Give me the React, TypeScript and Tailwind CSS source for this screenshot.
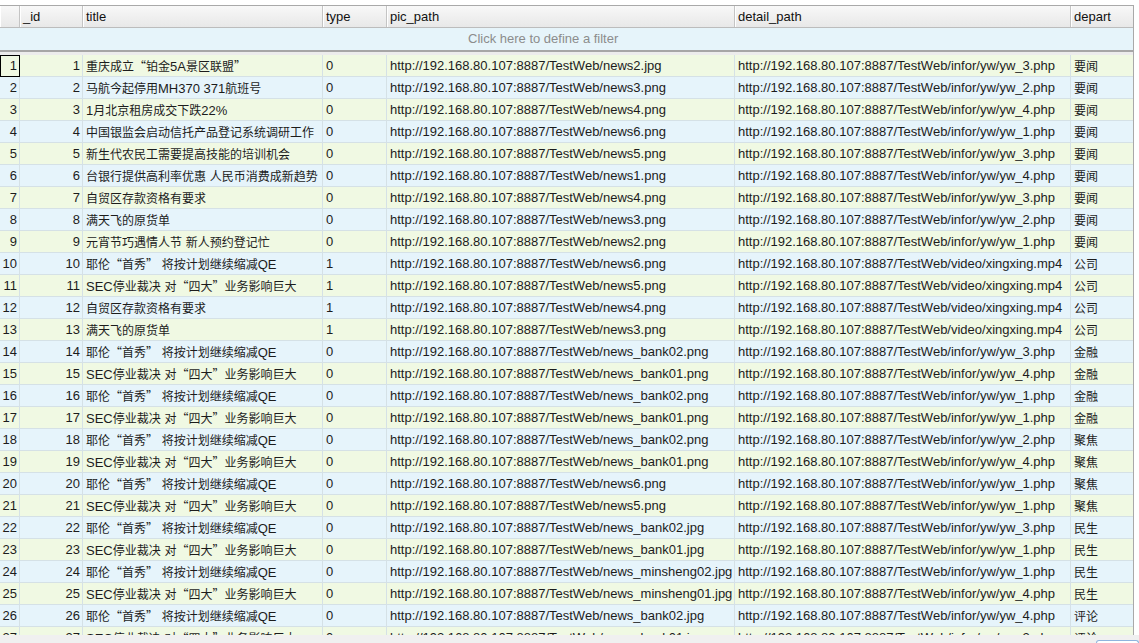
import type { ReactNode } from "react";

type NewsRow = {
  id: number;
  title: string;
  type: number;
  pic: string;
  detail: string;
  depart: string;
};

const HOST = "http://192.168.80.107:8887/TestWeb/";

const T_YELLEN = "耶伦“首秀” 将按计划继续缩减QE";
const T_SEC = "SEC停业裁决 对“四大”业务影响巨大";

const rows: NewsRow[] = [
  { id: 1, title: "重庆成立“铂金5A景区联盟”", type: 0, pic: "news2.jpg", detail: "infor/yw/yw_3.php", depart: "要闻" },
  { id: 2, title: "马航今起停用MH370 371航班号", type: 0, pic: "news3.png", detail: "infor/yw/yw_2.php", depart: "要闻" },
  { id: 3, title: "1月北京租房成交下跌22%", type: 0, pic: "news4.png", detail: "infor/yw/yw_4.php", depart: "要闻" },
  { id: 4, title: "中国银监会启动信托产品登记系统调研工作", type: 0, pic: "news6.png", detail: "infor/yw/yw_1.php", depart: "要闻" },
  { id: 5, title: "新生代农民工需要提高技能的培训机会", type: 0, pic: "news5.png", detail: "infor/yw/yw_3.php", depart: "要闻" },
  { id: 6, title: "台银行提供高利率优惠 人民币消费成新趋势", type: 0, pic: "news1.png", detail: "infor/yw/yw_4.php", depart: "要闻" },
  { id: 7, title: "自贸区存款资格有要求", type: 0, pic: "news4.png", detail: "infor/yw/yw_3.php", depart: "要闻" },
  { id: 8, title: "满天飞的原货单", type: 0, pic: "news3.png", detail: "infor/yw/yw_2.php", depart: "要闻" },
  { id: 9, title: "元宵节巧遇情人节 新人预约登记忙", type: 0, pic: "news2.png", detail: "infor/yw/yw_1.php", depart: "要闻" },
  { id: 10, title: T_YELLEN, type: 1, pic: "news6.png", detail: "video/xingxing.mp4", depart: "公司" },
  { id: 11, title: T_SEC, type: 1, pic: "news5.png", detail: "video/xingxing.mp4", depart: "公司" },
  { id: 12, title: "自贸区存款资格有要求", type: 1, pic: "news4.png", detail: "video/xingxing.mp4", depart: "公司" },
  { id: 13, title: "满天飞的原货单", type: 1, pic: "news3.png", detail: "video/xingxing.mp4", depart: "公司" },
  { id: 14, title: T_YELLEN, type: 0, pic: "news_bank02.png", detail: "infor/yw/yw_3.php", depart: "金融" },
  { id: 15, title: T_SEC, type: 0, pic: "news_bank01.png", detail: "infor/yw/yw_4.php", depart: "金融" },
  { id: 16, title: T_YELLEN, type: 0, pic: "news_bank02.png", detail: "infor/yw/yw_1.php", depart: "金融" },
  { id: 17, title: T_SEC, type: 0, pic: "news_bank01.png", detail: "infor/yw/yw_1.php", depart: "金融" },
  { id: 18, title: T_YELLEN, type: 0, pic: "news_bank02.png", detail: "infor/yw/yw_2.php", depart: "聚焦" },
  { id: 19, title: T_SEC, type: 0, pic: "news_bank01.png", detail: "infor/yw/yw_4.php", depart: "聚焦" },
  { id: 20, title: T_YELLEN, type: 0, pic: "news6.png", detail: "infor/yw/yw_1.php", depart: "聚焦" },
  { id: 21, title: T_SEC, type: 0, pic: "news5.png", detail: "infor/yw/yw_1.php", depart: "聚焦" },
  { id: 22, title: T_YELLEN, type: 0, pic: "news_bank02.jpg", detail: "infor/yw/yw_3.php", depart: "民生" },
  { id: 23, title: T_SEC, type: 0, pic: "news_bank01.jpg", detail: "infor/yw/yw_1.php", depart: "民生" },
  { id: 24, title: T_YELLEN, type: 0, pic: "news_minsheng02.jpg", detail: "infor/yw/yw_1.php", depart: "民生" },
  { id: 25, title: T_SEC, type: 0, pic: "news_minsheng01.jpg", detail: "infor/yw/yw_4.php", depart: "民生" },
  { id: 26, title: T_YELLEN, type: 0, pic: "news_bank02.jpg", detail: "infor/yw/yw_4.php", depart: "评论" },
  { id: 27, title: T_SEC, type: 0, pic: "news_bank01.jpg", detail: "infor/yw/yw_2.php", depart: "评论" },
];

const cols = "grid grid-cols-[20px_63px_240px_64px_348px_336px_63px]";

// CJK runs (incl. curly quotes) render in the Chinese font at 12px
function mixed(text: string): ReactNode[] {
  return text.split(/([\u3000-\u9fff\uff00-\uffef\u201c\u201d]+)/).map((part, i) =>
    /[\u3000-\u9fff\uff00-\uffef\u201c\u201d]/.test(part) ? (
      <span key={i} className="font-['Noto_Sans_CJK_SC',sans-serif] text-[12px]">
        {part}
      </span>
    ) : (
      <span key={i}>{part}</span>
    )
  );
}

function HeaderCell({ label }: { label: string }) {
  return (
    <div className="h-full overflow-hidden whitespace-nowrap border-r border-[#c4c4c4] pl-[3px] leading-[21px] shadow-[inset_1px_0_0_#ffffff]">
      {label}
    </div>
  );
}

function Cell({ children, right }: { children: ReactNode; right?: boolean }) {
  return (
    <div
      className={
        right
          ? "h-[22px] overflow-hidden whitespace-nowrap border-r border-b border-[#d5e1e6] pr-[2px] text-right leading-[21px]"
          : "h-[22px] overflow-hidden whitespace-nowrap border-r border-b border-[#d5e1e6] pl-[3px] leading-[21px]"
      }
    >
      {children}
    </div>
  );
}

export default function App() {
  return (
    <div className="flex h-[643px] w-[1139px] flex-col overflow-hidden bg-white font-['Liberation_Sans','Noto_Sans_CJK_SC',sans-serif] text-[13px] text-[#1c1c1c]">
      <div className="h-[5px] shrink-0" />
      <div className="w-[1134px] flex-1 overflow-hidden border-t border-r border-[#a9a9a9]">
        <div className={`${cols} h-[22px] border-b border-[#bcbcbc] bg-gradient-to-b from-[#f8f8f8] to-[#e8e8e8] text-[#111]`}>
          <HeaderCell label="" />
          <HeaderCell label="_id" />
          <HeaderCell label="title" />
          <HeaderCell label="type" />
          <HeaderCell label="pic_path" />
          <HeaderCell label="detail_path" />
          <HeaderCell label="depart" />
        </div>
        <div className="h-[22px] bg-[#e6f4fa] pl-[468px] leading-[21px] text-[#8c8c8c]">
          Click here to define a filter
        </div>
        <div className="h-[5px] border-t-2 border-[#a6a6a6] bg-[#ececec]" />
        {rows.map((r) => (
          <div
            key={r.id}
            className={`${cols} ${r.id % 2 === 1 ? "bg-[#f0f9e3]" : "bg-[#e6f4fb]"}`}
          >
            {r.id === 1 ? (
              <div className="h-[22px] border border-black pr-[2px] text-right leading-[20px]">
                {r.id}
              </div>
            ) : (
              <Cell right>{r.id}</Cell>
            )}
            <Cell right>{r.id}</Cell>
            <Cell>{mixed(r.title)}</Cell>
            <Cell>{r.type}</Cell>
            <Cell>{HOST + r.pic}</Cell>
            <Cell>{HOST + r.detail}</Cell>
            <Cell>{mixed(r.depart)}</Cell>
          </div>
        ))}
      </div>
      <div className="flex h-[8px] shrink-0 justify-end bg-[#f0f0f0]">
        <div className="mt-[5px] h-[3px] w-[43px] rounded-t-[3px] border border-b-0 border-[#8fb4de] bg-white" />
      </div>
    </div>
  );
}
